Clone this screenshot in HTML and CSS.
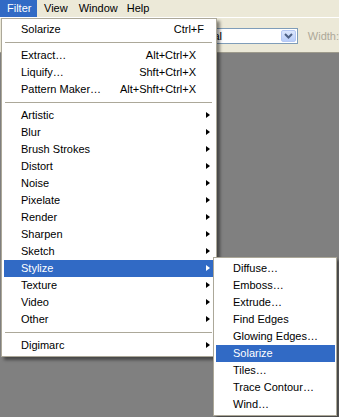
FILE: index.html
```html
<!DOCTYPE html>
<html>
<head>
<meta charset="utf-8">
<link rel="stylesheet" href="styles.css">
</head>
<body>
<div class="menubar">
  <span class="mb-item mb-active">Filter</span>
  <span class="mb-item mb-view">View</span>
  <span class="mb-item mb-window">Window</span>
  <span class="mb-item mb-help">Help</span>
</div>
<div class="toolbar">
  <div class="combo">
    <span class="combo-field"><span class="combo-text">Normal</span></span>
    <span class="combo-btn"><svg width="9" height="6" viewBox="0 0 9 6"><path d="M1 1 L4.5 4.5 L8 1" fill="none" stroke="#4d6185" stroke-width="2"/></svg></span>
  </div>
  <span class="tb-label">Width:</span>
</div>
<div class="workspace"></div>

<div class="menu main-menu">
  <div class="item"><span class="label">Solarize</span><span class="key key-f">Ctrl+F</span></div>
  <div class="sep"></div>
  <div class="item"><span class="label">Extract…</span><span class="key">Alt+Ctrl+X</span></div>
  <div class="item"><span class="label">Liquify…</span><span class="key">Shft+Ctrl+X</span></div>
  <div class="item"><span class="label">Pattern Maker…</span><span class="key">Alt+Shft+Ctrl+X</span></div>
  <div class="sep"></div>
  <div class="item sub"><span class="label">Artistic</span><span class="arrow"></span></div>
  <div class="item sub"><span class="label">Blur</span><span class="arrow"></span></div>
  <div class="item sub"><span class="label">Brush Strokes</span><span class="arrow"></span></div>
  <div class="item sub"><span class="label">Distort</span><span class="arrow"></span></div>
  <div class="item sub"><span class="label">Noise</span><span class="arrow"></span></div>
  <div class="item sub"><span class="label">Pixelate</span><span class="arrow"></span></div>
  <div class="item sub"><span class="label">Render</span><span class="arrow"></span></div>
  <div class="item sub"><span class="label">Sharpen</span><span class="arrow"></span></div>
  <div class="item sub"><span class="label">Sketch</span><span class="arrow"></span></div>
  <div class="item sub active"><span class="label">Stylize</span><span class="arrow"></span></div>
  <div class="item sub"><span class="label">Texture</span><span class="arrow"></span></div>
  <div class="item sub"><span class="label">Video</span><span class="arrow"></span></div>
  <div class="item sub"><span class="label">Other</span><span class="arrow"></span></div>
  <div class="sep"></div>
  <div class="item sub"><span class="label">Digimarc</span><span class="arrow"></span></div>
</div>

<div class="menu sub-menu">
  <div class="item"><span class="label">Diffuse…</span></div>
  <div class="item"><span class="label">Emboss…</span></div>
  <div class="item"><span class="label">Extrude…</span></div>
  <div class="item"><span class="label">Find Edges</span></div>
  <div class="item"><span class="label">Glowing Edges…</span></div>
  <div class="item active"><span class="label">Solarize</span></div>
  <div class="item"><span class="label">Tiles…</span></div>
  <div class="item"><span class="label">Trace Contour…</span></div>
  <div class="item"><span class="label">Wind…</span></div>
</div>
</body>
</html>
```

FILE: styles.css
```css
html, body {
  margin: 0;
  padding: 0;
}
body {
  width: 339px;
  height: 417px;
  overflow: hidden;
  background: #808080;
  font-family: "Liberation Sans", Arial, sans-serif;
  font-size: 11px;
  color: #000;
  position: relative;
}
.menubar {
  height: 17px;
  background: #ece9d8;
  display: flex;
  align-items: stretch;
  border-bottom: 1px solid #ffffff;
}
.mb-item {
  line-height: 17px;
  padding: 0 7px;
}
.mb-active {
  background: #316ac5;
  color: #fff;
  width: 23px;
}
.mb-view { margin-left: 0; }
.mb-window { margin-left: -3px; }
.mb-help { margin-left: -5px; }
.toolbar {
  height: 35px;
  background: #ece9d8;
  display: flex;
  align-items: flex-start;
  padding-top: 10px;
  box-sizing: border-box;
  border-bottom: 1px solid #9d9a8c;
}
.combo {
  margin-left: 212px;
  width: 97px;
  height: 16px;
  box-sizing: border-box;
  border: 1px solid #7f9db9;
  background: #fff;
  display: flex;
  align-items: center;
  justify-content: space-between;
}
.combo-field {
  width: 9px;
  overflow: hidden;
  display: flex;
  justify-content: flex-end;
  line-height: 14px;
}
.combo-text {
  flex: none;
}
.combo-btn {
  width: 15px;
  height: 12px;
  margin-right: 1px;
  background: linear-gradient(#dbe6fd, #b9cdf9);
  border: 1px solid #b5c8f3;
  box-sizing: border-box;
  border-radius: 2px;
  display: flex;
  align-items: center;
  justify-content: center;
}
.tb-label {
  margin-left: 10px;
  color: #aca899;
  line-height: 16px;
  white-space: nowrap;
}
.menu {
  position: absolute;
  background: #fff;
  border: 1px solid #aca899;
  box-shadow: 3px 3px 3px rgba(0, 0, 0, 0.45);
}
.main-menu {
  left: 1px;
  top: 18px;
  width: 209px;
  padding: 2px 3px 2px 2px;
}
.sub-menu {
  left: 213px;
  top: 257px;
  width: 119px;
  padding: 2px 1px 2px 2px;
}
.item {
  height: 17px;
  line-height: 17px;
  padding-left: 17px;
  position: relative;
  white-space: nowrap;
}
.item.active {
  background: #316ac5;
  color: #fff;
}
.key {
  position: absolute;
  right: 17px;
  top: 0;
}
.key.key-f {
  right: 9px;
}
.arrow {
  position: absolute;
  right: 3px;
  top: 5px;
  width: 0;
  height: 0;
  border-left: 4px solid #000;
  border-top: 3.5px solid transparent;
  border-bottom: 3.5px solid transparent;
}
.item.active .arrow {
  border-left-color: #fff;
}
.sep {
  height: 9px;
  display: flex;
  align-items: center;
  padding: 0 1px;
}
.sep::after {
  content: "";
  display: block;
  height: 1px;
  width: 100%;
  background: #aca899;
}
```
